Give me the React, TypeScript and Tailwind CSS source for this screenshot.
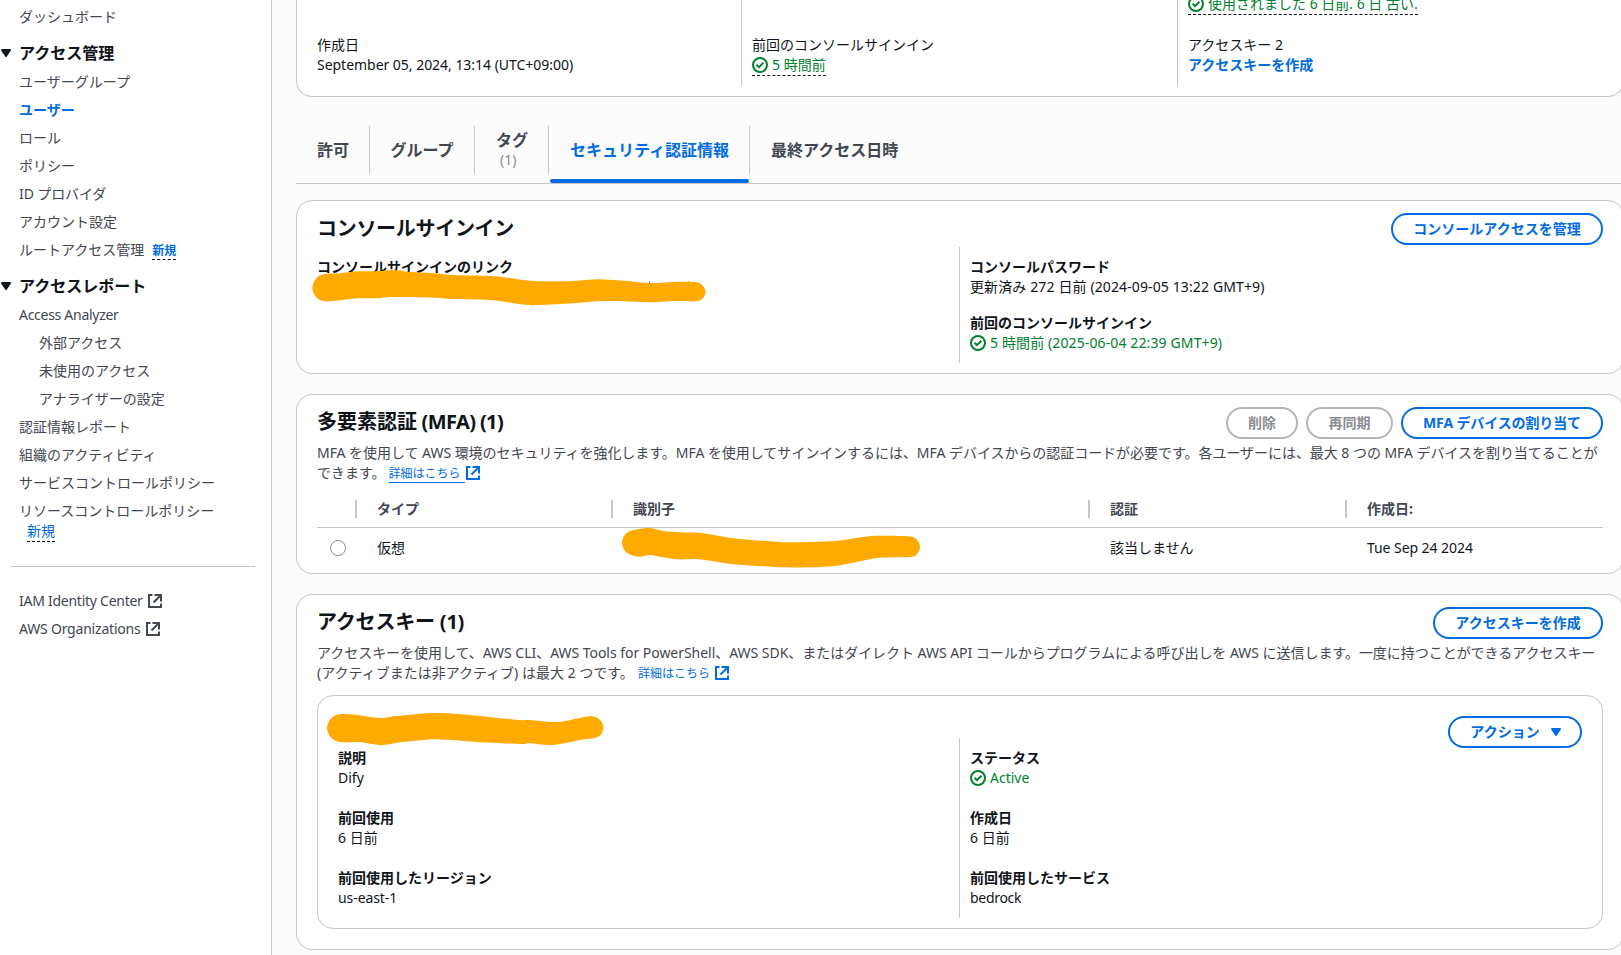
import React from "react";

const CheckIcon = () => (
  <svg viewBox="0 0 16 16" strokeWidth="2" className="h-4 w-4 shrink-0 fill-none stroke-[#00802f]">
    <circle cx="8" cy="8" r="7" />
    <path d="m4.6 7.8 2.4 2.4 4.4-4.4" />
  </svg>
);

const ExternalIcon = () => (
  <svg viewBox="0 0 16 16" strokeWidth="2" className="h-4 w-4 shrink-0 fill-none stroke-current">
    <path d="M7.5 2H14v6.5" />
    <path d="m6.5 9.5 7-7" />
    <path d="M14 10.5V14H2V2h3.5" />
  </svg>
);

const Caret = () => (
  <svg viewBox="0 0 16 16" strokeWidth="2" className="h-4 w-4 shrink-0 fill-current stroke-current">
    <path strokeLinejoin="round" d="M4 5h8l-4 6-4-6z" />
  </svg>
);

function Button({ children, width, disabled = false }: { children: React.ReactNode; width: string; disabled?: boolean }) {
  const tone = disabled ? "border-[#b4b4bb] text-[#8c8c94]" : "border-[#006ce0] text-[#006ce0]";
  return (
    <button
      className={`flex h-8 items-center justify-center whitespace-nowrap rounded-[20px] border-2 text-sm leading-5 font-bold ${width} ${tone}`}
    >
      {children}
    </button>
  );
}

function NavItem({ children, nested = false, active = false }: { children: React.ReactNode; nested?: boolean; active?: boolean }) {
  return (
    <li className={`${nested ? "pl-5" : ""} ${active ? "font-bold text-[#006ce0]" : ""}`}>
      <a className="flex items-center whitespace-nowrap">{children}</a>
    </li>
  );
}

function NavHeading({ children }: { children: React.ReactNode }) {
  return (
    <h3 className="-ml-[21px] flex h-5 items-center gap-[5px] text-base leading-5 font-bold text-[#0f141a]">
      <Caret />
      {children}
    </h3>
  );
}

function Sidebar() {
  return (
    <nav className="h-[955px] w-[272px] shrink-0 border-r border-[#c6c6cd] bg-white pt-[7px] pl-[19px] text-sm leading-5 text-[#424650]">
      <ul>
        <NavItem>ダッシュボード</NavItem>
      </ul>
      <div className="mt-4">
        <NavHeading>アクセス管理</NavHeading>
        <ul className="mt-[9px] flex flex-col gap-2">
          <NavItem>ユーザーグループ</NavItem>
          <NavItem active>ユーザー</NavItem>
          <NavItem>ロール</NavItem>
          <NavItem>ポリシー</NavItem>
          <NavItem>
            <span className="tracking-[-0.1px]">ID プロバイダ</span>
          </NavItem>
          <NavItem>アカウント設定</NavItem>
          <NavItem>
            ルートアクセス管理
            <span className="ml-2 h-[19px] border-b border-dashed border-[#0f141a] text-xs leading-5 font-bold text-[#006ce0]">新規</span>
          </NavItem>
        </ul>
      </div>
      <div className="mt-4">
        <NavHeading>アクセスレポート</NavHeading>
        <ul className="mt-[9px] flex flex-col gap-2">
          <NavItem>
            <span className="tracking-[-0.28px]">Access Analyzer</span>
          </NavItem>
          <NavItem nested>外部アクセス</NavItem>
          <NavItem nested>未使用のアクセス</NavItem>
          <NavItem nested>アナライザーの設定</NavItem>
          <NavItem>認証情報レポート</NavItem>
          <NavItem>組織のアクティビティ</NavItem>
          <NavItem>サービスコントロールポリシー</NavItem>
          <li>
            リソースコントロールポリシー
            <span className="ml-2 block h-[21px] w-7 border-b border-dashed border-[#0f141a] text-[#006ce0]">新規</span>
          </li>
        </ul>
      </div>
      <hr className="mt-6 mr-4 -ml-2 border-[#c6c6cd]" />
      <ul className="mt-6 flex flex-col gap-2">
        <NavItem>
          <span className="w-32 tracking-[-0.26px]">IAM Identity Center</span>
          <ExternalIcon />
        </NavItem>
        <NavItem>
          <span className="w-[126px] tracking-[-0.2px]">AWS Organizations</span>
          <ExternalIcon />
        </NavItem>
      </ul>
    </nav>
  );
}

function Field({ label, children }: { label: string; children: React.ReactNode }) {
  return (
    <div>
      <div className="font-bold">{label}</div>
      <div className="flex items-center gap-1">{children}</div>
    </div>
  );
}

function Summary() {
  return (
    <section className="h-[97px] overflow-hidden rounded-b-2xl border border-t-0 border-[#c6c6cd] bg-white px-5 pb-[10px]">
      <div className="flex h-[86px]">
        <div className="w-[424px] pt-[35px]">
          <div>作成日</div>
          <div className="tracking-[-0.03px]">September 05, 2024, 13:14 (UTC+09:00)</div>
        </div>
        <div className="w-[436px] border-l border-[#c6c6cd] pt-[35px] pl-[10px]">
          <div>前回のコンソールサインイン</div>
          <div className="flex h-[21px] w-fit items-center gap-1 border-b border-dashed border-[#0f141a] text-[#00802f]">
            <CheckIcon />5 時間前
          </div>
        </div>
        <div className="border-l border-[#c6c6cd] pl-[10px]">
          <div className="-mt-[6px] flex h-[21px] w-fit items-center gap-1 border-b border-dashed border-[#0f141a] text-[#00802f]">
            <CheckIcon />使用されました 6 日前. 6 日 古い.
          </div>
          <div className="mt-5">アクセスキー 2</div>
          <div className="font-bold text-[#006ce0]">アクセスキーを作成</div>
        </div>
      </div>
    </section>
  );
}

function Tabs() {
  const sep = "h-12 border-r border-[#c6c6cd]";
  return (
    <div className="mt-[29px] flex h-[58px] items-start border-b border-[#c6c6cd] text-base leading-5 font-bold text-[#424650]">
      <div className={`flex w-[74px] items-center pl-[21px] ${sep}`}>許可</div>
      <div className={`flex w-[105px] items-center justify-center ${sep}`}>グループ</div>
      <div className={`flex w-[74px] flex-col justify-center pl-[21px] ${sep}`}>
        <span>タグ</span>
        <span className="pl-1 text-sm leading-5 font-normal text-[#8c8c94]">(1)</span>
      </div>
      <div className="flex h-[57px] w-[201px] flex-col justify-between">
        <div className={`flex items-center pl-[21px] text-[#006ce0] ${sep}`}>セキュリティ認証情報</div>
        <div className="mr-px ml-px h-1 rounded-sm bg-[#006ce0]" />
      </div>
      <div className="flex h-12 items-center pl-[21px]">最終アクセス日時</div>
    </div>
  );
}

type Point = [number, number];

// Closed Catmull-Rom curve through every point, written as cubic segments.
function smoothPath(points: Point[]) {
  const at = (i: number) => points[(i + points.length) % points.length];
  const segments = points.map((p1, i) => {
    const p0 = at(i - 1);
    const p2 = at(i + 1);
    const p3 = at(i + 2);
    const c1 = [p1[0] + (p2[0] - p0[0]) / 6, p1[1] + (p2[1] - p0[1]) / 6];
    const c2 = [p2[0] - (p3[0] - p1[0]) / 6, p2[1] - (p3[1] - p1[1]) / 6];
    return `C${c1.join(" ")} ${c2.join(" ")} ${p2.join(" ")}`;
  });
  return `M${points[0].join(" ")}${segments.join("")}Z`;
}

function Scribble({ points, className, children }: { points: Point[]; className: string; children?: React.ReactNode }) {
  return (
    <svg className={`absolute overflow-visible fill-[#ffaa00] ${className}`}>
      {children}
      <path d={smoothPath(points)} />
    </svg>
  );
}

const linkMarker: Point[] = [
  [13, 5], [28, 4.3], [44.7, 2.3], [64.7, 2.3], [81.3, 1], [98, 3], [121, 4], [141, 6], [178, 7], [195, 8.7], [213, 11.3],
  [231, 12.3], [261, 12], [286, 10.3], [311, 11.7], [340, 14], [361, 13], [383, 13], [390.5, 16.5], [393.5, 23], [390.5, 29.5],
  [383, 32.3], [361, 32], [340, 33.3], [311, 32.3], [286, 32.3], [261, 34.3], [228, 36], [213, 35.7], [195, 33], [178, 31],
  [141, 30], [121, 28.7], [81, 28], [65, 29.3], [45, 29.3], [28, 31.3], [13, 32.3], [4.5, 28.5], [0.3, 19], [4.5, 9],
];

const deviceMarker: Point[] = [
  [16, 1.3], [28, 0], [41, 3], [58, 4.3], [77, 4.7], [96, 7.7], [115, 10.7], [159, 14], [188, 14], [216, 12.7], [239, 9.3],
  [256, 7.7], [286, 8.3], [294.5, 11.5], [298, 18.7], [295, 26], [288, 29], [258, 29.7], [239, 33], [214, 37.7], [188, 39.3],
  [163, 39.3], [121, 37], [100, 34.7], [77, 31.3], [56, 31.3], [41, 29.3], [28, 27], [16, 28.7], [4.5, 24.5], [0, 15], [4.5, 5],
];

const keyMarker: Point[] = [
  [13, 1.3], [30, 2], [53, 5], [70, 3], [110, 0], [150, 2.7], [191, 7], [203, 7], [225, 9], [240, 7.7], [263, 3.3], [273, 7],
  [276.3, 14.3], [273.5, 22], [266, 25.3], [253, 27], [225, 32], [203, 30.3], [193, 31], [150, 29], [110, 26.3], [86, 28],
  [70, 29.7], [53, 32], [33, 29], [13, 29], [4, 24.5], [0, 15], [4, 5.5],
];

function ConsoleSignIn() {
  return (
    <section className="relative mt-4 h-[174px] rounded-2xl border border-[#c6c6cd] bg-white px-5 pt-3">
      <div className="flex h-8 items-center justify-between">
        <h2 className="text-xl leading-6 font-bold tracking-[-0.3px]">コンソールサインイン</h2>
        <Button width="w-[212px]">コンソールアクセスを管理</Button>
      </div>
      <div className="mt-[2px] flex h-[116px]">
        <div className="w-[642px] pt-[10px]">
          <div className="font-bold">コンソールサインインのリンク</div>
        </div>
        <div className="flex flex-col gap-4 border-l border-[#c6c6cd] pt-[10px] pl-[10px]">
          <Field label="コンソールパスワード">
            <span className="tracking-[0.12px]">更新済み 272 日前 (2024-09-05 13:22 GMT+9)</span>
          </Field>
          <Field label="前回のコンソールサインイン">
            <CheckIcon />
            <span className="tracking-[0.12px] text-[#00802f]">5 時間前 (2025-06-04 22:39 GMT+9)</span>
          </Field>
        </div>
      </div>
      <Scribble points={linkMarker} className="top-[68px] left-[15px] h-[37px] w-[396px]">
        <path className="fill-[#0f141a]/70" d="M337 12.5h1v3h-1zM376 12.5h1v3h-1z" />
      </Scribble>
    </section>
  );
}

function MfaTable() {
  const head = "h-[18px] border-l-2 border-[#c6c6cd] pl-5";
  return (
    <div className="mt-[17px]">
      <div className="flex h-[28px] items-start border-b border-[#c6c6cd] leading-[18px] font-bold text-[#424650]">
        <div className="w-[38px]" />
        <div className={`w-[256px] ${head}`}>タイプ</div>
        <div className={`w-[477px] ${head}`}>識別子</div>
        <div className={`w-[257px] ${head}`}>認証</div>
        <div className={head}>作成日:</div>
      </div>
      <div className="flex h-10 items-center">
        <div className="w-[60px] pl-[13px]">
          <div className="h-4 w-4 rounded-full border border-[#8c8c94]" />
        </div>
        <div className="w-[733px]">仮想</div>
        <div className="w-[257px]">該当しません</div>
        <div className="tracking-[-0.06px]">Tue Sep 24 2024</div>
      </div>
    </div>
  );
}

function Mfa() {
  return (
    <section className="relative mt-5 h-[180px] rounded-2xl border border-[#c6c6cd] bg-white px-5 pt-3">
      <div className="flex h-8 items-center justify-between">
        <h2 className="-mt-[2px] text-xl leading-6 font-bold">
          多要素認証<span className="tracking-[-0.62px]"> (MFA) (1)</span>
        </h2>
        <div className="flex gap-2">
          <Button width="w-[72px]" disabled>
            削除
          </Button>
          <Button width="w-[87px]" disabled>
            再同期
          </Button>
          <Button width="w-[202px]">
            <span className="tracking-[-0.12px]">MFA デバイスの割り当て</span>
          </Button>
        </div>
      </div>
      <div className="mt-1 whitespace-nowrap text-[#424650]">
        <div className="tracking-[-0.04px]">
          MFA を使用して AWS 環境のセキュリティを強化します。MFA を使用してサインインするには、MFA デバイスからの認証コードが必要です。各ユーザーには、最大 8 つの MFA デバイスを割り当てることが
        </div>
        <div className="flex h-5 items-center">
          できます。
          <a className="ml-[3px] flex h-5 items-center text-xs text-[#006ce0]">
            <span className="h-5 w-[76px] border-b border-[#006ce0] leading-[22px]">詳細はこちら</span>
            <ExternalIcon />
          </a>
        </div>
      </div>
      <MfaTable />
      <Scribble points={deviceMarker} className="top-[133px] left-[325px] h-[40px] w-[300px]" />
    </section>
  );
}

function AccessKeys() {
  return (
    <section className="mt-5 h-[356px] rounded-2xl border border-[#c6c6cd] bg-white px-5 pt-3">
      <div className="flex h-8 items-center justify-between">
        <h2 className="-mt-[2px] text-xl leading-6 font-bold tracking-[-0.2px]">アクセスキー (1)</h2>
        <Button width="w-[170px]">アクセスキーを作成</Button>
      </div>
      <div className="mt-1 whitespace-nowrap text-[#424650]">
        <div className="tracking-[-0.035px]">
          アクセスキーを使用して、AWS CLI、AWS Tools for PowerShell、AWS SDK、またはダイレクト AWS API コールからプログラムによる呼び出しを AWS に送信します。一度に持つことができるアクセスキー
        </div>
        <div className="flex h-5 items-center">
          <span className="w-[321px]">(アクティブまたは非アクティブ) は最大 2 つです。</span>
          <a className="flex h-5 items-center text-xs text-[#006ce0]">
            <span className="h-5 w-[76px] leading-[22px]">詳細はこちら</span>
            <ExternalIcon />
          </a>
        </div>
      </div>
      <div className="relative mt-3 h-[234px] rounded-2xl border border-[#c6c6cd] px-5 pt-5">
        <div className="flex justify-end">
          <Button width="w-[134px]">
            アクション
            <span className="ml-2 -mr-1">
              <Caret />
            </span>
          </Button>
        </div>
        <div className="-mt-[10px] flex h-[180px]">
          <div className="flex w-[621px] flex-col gap-5 pt-[10px]">
            <Field label="説明">Dify</Field>
            <Field label="前回使用">6 日前</Field>
            <Field label="前回使用したリージョン">
              <span className="tracking-[-0.08px]">us-east-1</span>
            </Field>
          </div>
          <div className="flex flex-col gap-5 border-l border-[#c6c6cd] pt-[10px] pl-[10px]">
            <Field label="ステータス">
              <CheckIcon />
              <span className="text-[#00802f]">Active</span>
            </Field>
            <Field label="作成日">6 日前</Field>
            <Field label="前回使用したサービス">
              <span className="tracking-[-0.3px]">bedrock</span>
            </Field>
          </div>
        </div>
        <Scribble points={keyMarker} className="top-[17px] left-[9px] h-[33px] w-[278px]" />
      </div>
    </section>
  );
}

export default function App() {
  return (
    <div
      lang="ja"
      className="flex h-[955px] w-[1621px] overflow-hidden bg-[#fcfcfd] font-['Noto_Sans','Noto_Sans_CJK_JP',sans-serif] text-sm leading-5 text-[#0f141a]"
    >
      <Sidebar />
      <main className="ml-6 w-[1328px] shrink-0">
        <Summary />
        <Tabs />
        <ConsoleSignIn />
        <Mfa />
        <AccessKeys />
      </main>
    </div>
  );
}
